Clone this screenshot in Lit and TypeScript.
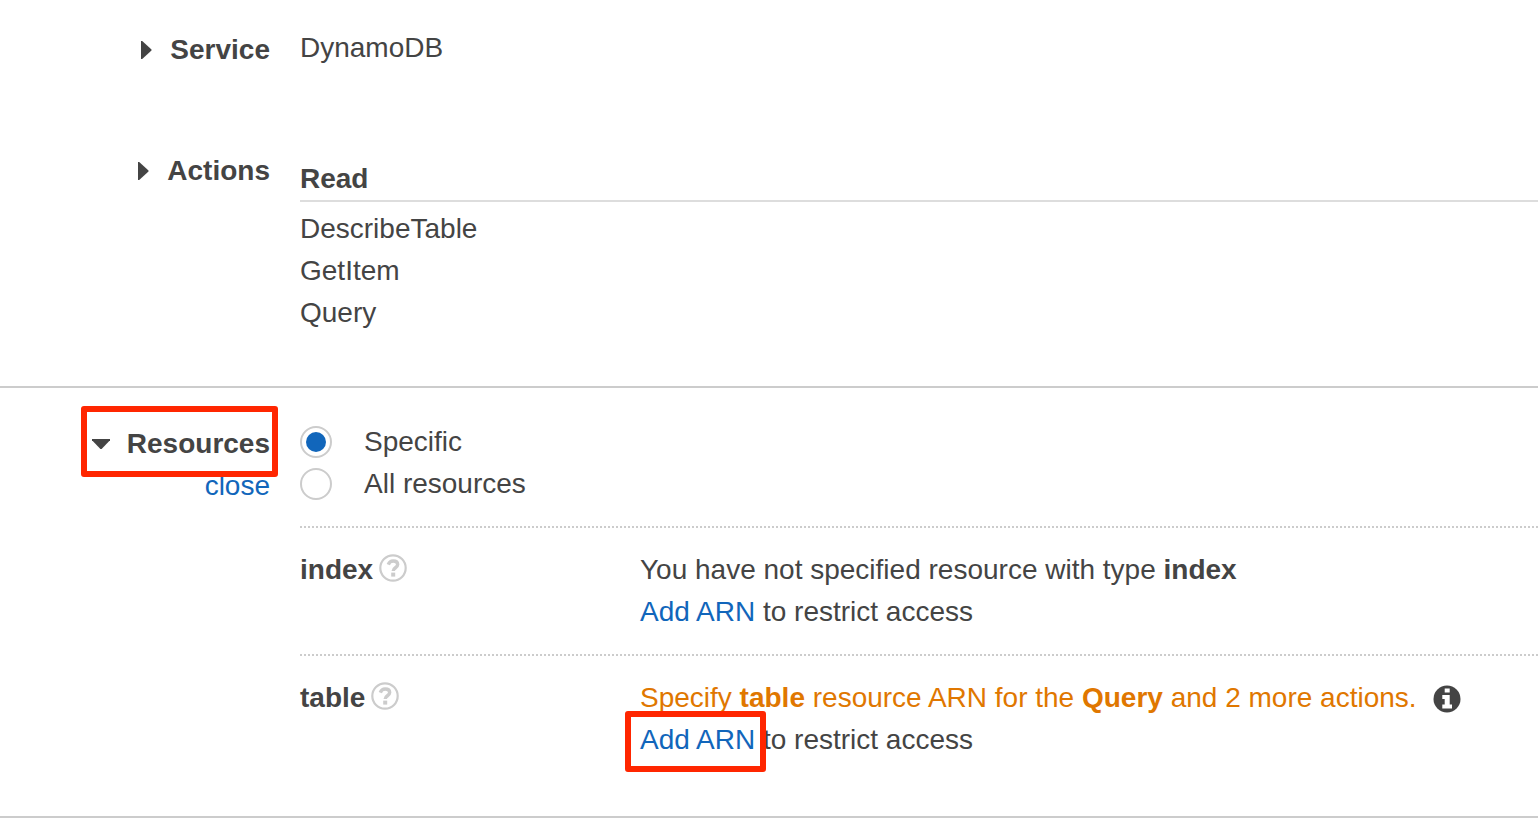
import { LitElement, html, css, svg } from "lit";
import { customElement, property, state } from "lit/decorators.js";

@customElement("section-row")
class SectionRow extends LitElement {
  @property() label = "";
  @property({ type: Boolean, reflect: true }) open = false;
  @property({ type: Boolean }) marked = false;

  static styles = css`
    :host {
      display: grid;
      grid-template-columns: 270px minmax(0, 1fr);
      column-gap: 30px;
    }
    .side {
      display: flex;
      flex-direction: column;
      align-items: flex-end;
      padding-top: 2px;
    }
    .toggle {
      position: relative;
      display: flex;
      align-items: center;
      gap: 16px;
      padding: 0;
      border: 0;
      background: none;
      color: inherit;
      font: inherit;
      font-weight: bold;
      cursor: pointer;
    }
    .caret {
      display: block;
      fill: currentColor;
    }
    .marker {
      position: absolute;
      inset: -17px -8px -12px -10px;
      border: 6px solid #ff2600;
      border-radius: 3px;
      pointer-events: none;
      z-index: 1;
    }
  `;

  render() {
    const caret = this.open
      ? svg`<svg class="caret" width="20" height="20" viewBox="0 0 20 20"><path d="M1 5h18v1.2L10.6 15h-1.2L1 6.200Z"/></svg>`
      : svg`<svg class="caret" width="14" height="20" viewBox="0 0 14 20"><path d="M1 1h1.200L11.500 9.400v1.200L2.200 19H1Z"/></svg>`;
    return html`
      <div class="side">
        <button class="toggle" type="button" aria-expanded=${this.open ? "true" : "false"}>
          ${caret}<span>${this.label}</span>
          ${this.marked ? html`<span class="marker"></span>` : null}
        </button>
        <slot name="side"></slot>
      </div>
      <div><slot></slot></div>
    `;
  }
}

@customElement("app-root")
class AppRoot extends LitElement {
  @state() private scope = "specific";

  static styles = css`
    :host {
      display: block;
      overflow-x: hidden;
      background: #fff;
      color: #444;
      font: 28px/42px "Liberation Sans", Arial, sans-serif;
    }
    .summary {
      padding: 27px 0 52px;
      border-bottom: 2px solid #ccc;
    }
    .service {
      padding-bottom: 77px;
    }
    .resources {
      padding: 33px 0 34px;
      border-bottom: 2px solid #ccc;
    }
    .level {
      margin: 0 0 6px;
      padding-top: 10px;
      border-bottom: 2px solid #ddd;
      font-size: 28px;
      font-weight: bold;
    }
    .list {
      margin: 0;
      padding: 0;
      list-style: none;
    }
    a {
      color: #1166bb;
      text-decoration: none;
    }
    .scope {
      margin: 0;
      padding: 0 0 21px;
      border: 0;
    }
    .option {
      display: flex;
      align-items: center;
      gap: 32px;
    }
    .radio {
      appearance: none;
      box-sizing: border-box;
      width: 32px;
      height: 32px;
      margin: 0;
      border: 2px solid #ccc;
      border-radius: 50%;
      background: #fff;
    }
    .radio:checked {
      padding: 4px;
      background: #1166bb content-box;
    }
    .resource {
      display: grid;
      grid-template-columns: 340px minmax(0, 1fr);
      padding: 21px 0;
      border-top: 2px dotted #ccc;
    }
    .resource p {
      margin: 0;
    }
    .name {
      display: flex;
      align-items: flex-start;
      gap: 6px;
      font-weight: bold;
    }
    .help,
    .info {
      display: flex;
      padding: 0;
      border: 0;
      background: none;
      cursor: pointer;
    }
    .help {
      padding-top: 5px;
    }
    .info {
      padding-top: 2px;
    }
    .warning {
      display: flex;
      align-items: center;
      gap: 16px;
      color: #e07700;
    }
    .marked {
      position: relative;
    }
    .marker {
      position: absolute;
      inset: -13px -11px -17px -15px;
      border: 6px solid #ff2600;
      border-radius: 3px;
      pointer-events: none;
    }
  `;

  private option(value: string, label: string) {
    return html`<label class="option">
      <input class="radio" type="radio" name="scope" .value=${value} .checked=${this.scope === value}
        @change=${() => (this.scope = value)} />
      <span>${label}</span>
    </label>`;
  }

  private help(name: string) {
    return html`<button class="help" type="button" aria-label="Help: ${name}">
      <svg width="28" height="28" viewBox="0 0 28 28" fill="none" stroke="#ccc">
        <circle cx="14" cy="14" r="12.700" stroke-width="2.200"/>
        <path d="M9.300 10.600C10.200 8 12 7 14.200 7c2.700 0 4.500 1.400 4.500 3.500 0 3.300-4.500 3.200-4.500 6.500" stroke-width="3.400"/>
        <path d="M14.200 18.600v4" stroke-width="4"/>
      </svg>
    </button>`;
  }

  render() {
    return html`
      <div class="summary">
        <section-row class="service" label="Service">DynamoDB</section-row>
        <section-row label="Actions">
          <div>
            <h3 class="level">Read</h3>
            <ul class="list">
              ${["DescribeTable", "GetItem", "Query"].map((a) => html`<li>${a}</li>`)}
            </ul>
          </div>
        </section-row>
      </div>
      <div class="resources">
        <section-row label="Resources" open marked>
          <a slot="side" href="#">close</a>
          <fieldset class="scope" aria-label="Resources">
            ${this.option("specific", "Specific")} ${this.option("all", "All resources")}
          </fieldset>
          <div class="resource">
            <div class="name">index ${this.help("index")}</div>
            <div>
              <p>You have not specified resource with type <b>index</b></p>
              <p><a href="#">Add ARN</a> to restrict access</p>
            </div>
          </div>
          <div class="resource">
            <div class="name">table ${this.help("table")}</div>
            <div>
              <div class="warning">
                <p>Specify <b>table</b> resource ARN for the <b>Query</b> and 2 more actions.</p>
                <button class="info" type="button" aria-label="Details">
                  <svg width="28" height="28" viewBox="0 0 28 28">
                    <circle cx="14" cy="14" r="13.500" fill="#444"/>
                    <path fill="#fff" d="M11.700 3.500h5v4h-5zM9.300 10h7.400v9.500h2.300v4H9.300v-4h2.400V14H9.300z"/>
                  </svg>
                </button>
              </div>
              <p><a class="marked" href="#">Add ARN<span class="marker"></span></a> to restrict access</p>
            </div>
          </div>
        </section-row>
      </div>
    `;
  }
}
